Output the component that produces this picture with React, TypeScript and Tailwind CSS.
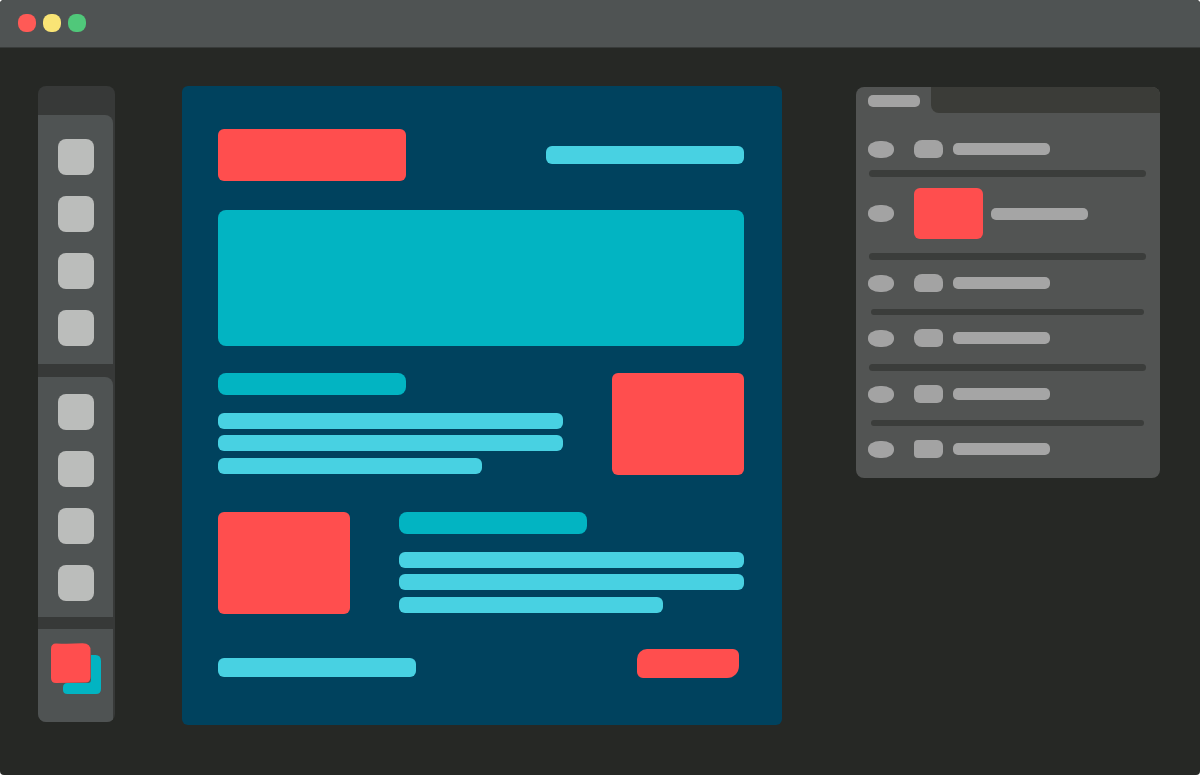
import React from "react";
import clsx from "clsx";

function ToolGroup({ tools, className }: { tools: string[]; className: string }) {
  return (
    <div className={clsx("mr-0.5 flex flex-col items-center gap-[21px] rounded-tr-lg bg-[#4f5353] pl-px", className)}>
      {tools.map((tool) => (
        <button
          key={tool}
          type="button"
          aria-label={tool}
          className="h-9 w-9 cursor-pointer rounded-lg bg-[#bbbdbb]"
        />
      ))}
    </div>
  );
}

function Toolbar() {
  return (
    <aside
      aria-label="Tools"
      className="mr-[67px] w-[77px] shrink-0 overflow-hidden rounded-lg bg-[#373938] pt-[29px]"
    >
      <ToolGroup tools={["Move", "Select", "Lasso", "Crop"]} className="pt-6 pb-[18px]" />
      <div className="h-[13px]" />
      <ToolGroup tools={["Brush", "Eraser", "Fill", "Type"]} className="pt-[17px] pb-4" />
      <div className="h-3" />
      <div className="mr-0.5 flex justify-end bg-[#4f5353] pt-3.5 pr-[11px] pb-7">
        <button type="button" aria-label="Foreground and background colours" className="cursor-pointer">
          <svg width="51" height="51" viewBox="0 0 51 51" className="block">
            <path
              d="M40 12h4.500q5.500 0 5.500 6v28q0 5-5 5H16.500q-4.500 0-4.500-4v-2.500q0-4.500 4.500-4.500H37q3 0 3-3Z"
              fill="#02b4c2"
            />
            <path
              d="M5 .5Q18 1 31 .3Q40 0 39.500 8V34q0 5.500-5 5.500L5 40Q0 40 0 35V6Q0 .5 5 .5Z"
              fill="#ff4e4e"
            />
          </svg>
        </button>
      </div>
    </aside>
  );
}

function Copy({ className }: { className?: string }) {
  return (
    <div className={clsx("flex w-[345px] flex-col", className)}>
      <div className="mb-[18px] h-[22px] w-[188px] rounded-lg bg-[#02b4c2]" />
      <div className="flex flex-col gap-1.5">
        <div className="h-4 rounded-md bg-[#48d1e2]" />
        <div className="h-4 rounded-md bg-[#48d1e2]" />
        <div className="mt-px h-4 w-[264px] rounded-md bg-[#48d1e2]" />
      </div>
    </div>
  );
}

function Canvas() {
  return (
    <main className="min-w-[600px] flex-1 rounded-md bg-[#00425e] pt-[43px] pr-[38px] pb-[47px] pl-9">
      <div className="flex items-center justify-between">
        <div className="h-[52px] w-[188px] rounded-md bg-[#ff4e4e]" />
        <div className="h-[18px] w-[198px] rounded-md bg-[#48d1e2]" />
      </div>
      <div className="mt-[29px] h-[136px] rounded-lg bg-[#02b4c2]" />
      <div className="mt-[27px] flex justify-between">
        <Copy />
        <div className="h-[102px] w-[132px] rounded-md bg-[#ff4e4e]" />
      </div>
      <div className="mt-[37px] flex justify-between">
        <div className="h-[102px] w-[132px] rounded-md bg-[#ff4e4e]" />
        <Copy />
      </div>
      <div className="mt-[35px] flex items-center justify-between">
        <div className="mt-2 h-[19px] w-[198px] rounded-md bg-[#48d1e2]" />
        <div className="mr-[5px] h-[29px] w-[102px] rounded-tl-[10px] rounded-tr-md rounded-br-xl rounded-bl-md bg-[#ff4e4e]" />
      </div>
    </main>
  );
}

type Layer = {
  id: string;
  row: string;
  chip: string;
  rule?: string;
};

const layers: Layer[] = [
  { id: "Layer 1", row: "pt-[27px] pb-3", chip: "rounded-t-lg rounded-b-md", rule: "h-[7px]" },
  { id: "Layer 2", row: "pt-[11px] pb-3.5", chip: "", rule: "h-[7px]" },
  { id: "Layer 3", row: "pt-3.5 pb-[17px]", chip: "rounded-t-lg rounded-b-md", rule: "mx-0.5 h-1.5" },
  { id: "Layer 4", row: "pt-3.5 pb-[17px]", chip: "rounded-l-lg rounded-r-md", rule: "h-[7px]" },
  { id: "Layer 5", row: "pt-3.5 pb-[17px]", chip: "rounded-md", rule: "mx-0.5 h-1.5" },
  { id: "Layer 6", row: "pt-3.5 pb-5", chip: "rounded-l rounded-r-md" },
];

function LayersPanel() {
  return (
    <aside
      aria-label="Layers"
      className="mt-px ml-[74px] w-[304px] shrink-0 self-start overflow-hidden rounded-lg bg-[#525453]"
    >
      <div className="flex h-[26px]">
        <div className="flex w-[75px] items-center pt-0.5 pl-3">
          <div className="h-3 w-[52px] rounded-[5px] bg-[#a3a3a3]" />
        </div>
        <div className="flex-1 rounded-bl-lg bg-[#3b3c38]" />
      </div>
      <ul className="pr-3.5 pl-3">
        {layers.map((layer, i) => (
          <li key={layer.id}>
            <div className={clsx("flex items-center", layer.row)}>
              <button
                type="button"
                aria-label={`Toggle ${layer.id}`}
                className="mr-5 h-[17px] w-[26px] cursor-pointer rounded-[12px/8px] bg-[#a3a3a3]"
              />
              {i === 1 ? (
                <div className="mr-2 h-[51px] w-[69px] rounded-md bg-[#ff4e4e]" />
              ) : (
                <div className={clsx("mr-2.5 h-[18px] w-[29px] bg-[#a3a3a3]", layer.chip)} />
              )}
              <div className="h-3 w-[97px] rounded-[5px] bg-[#a5a5a5]" />
            </div>
            {layer.rule && (
              <div className="pl-px">
                <div className={clsx("rounded-full bg-[#3b3d3b]", layer.rule)} />
              </div>
            )}
          </li>
        ))}
      </ul>
    </aside>
  );
}

export default function App() {
  return (
    <div className="min-h-screen bg-white">
      <div className="flex min-h-screen flex-col overflow-hidden rounded bg-[#262825]">
        <header className="flex h-12 items-center gap-[7px] border-b border-[#383b3a] bg-[#4f5353] pb-px pl-[18px]">
          <button type="button" aria-label="Close" className="size-[18px] cursor-pointer rounded-lg bg-[#ff5a56]" />
          <button type="button" aria-label="Minimise" className="size-[18px] cursor-pointer rounded-lg bg-[#f9e475]" />
          <button type="button" aria-label="Zoom" className="size-[18px] cursor-pointer rounded-lg bg-[#50c87a]" />
        </header>
        <div className="flex items-start pt-[38px] pr-10 pl-[38px]">
          <Toolbar />
          <Canvas />
          <LayersPanel />
        </div>
      </div>
    </div>
  );
}
